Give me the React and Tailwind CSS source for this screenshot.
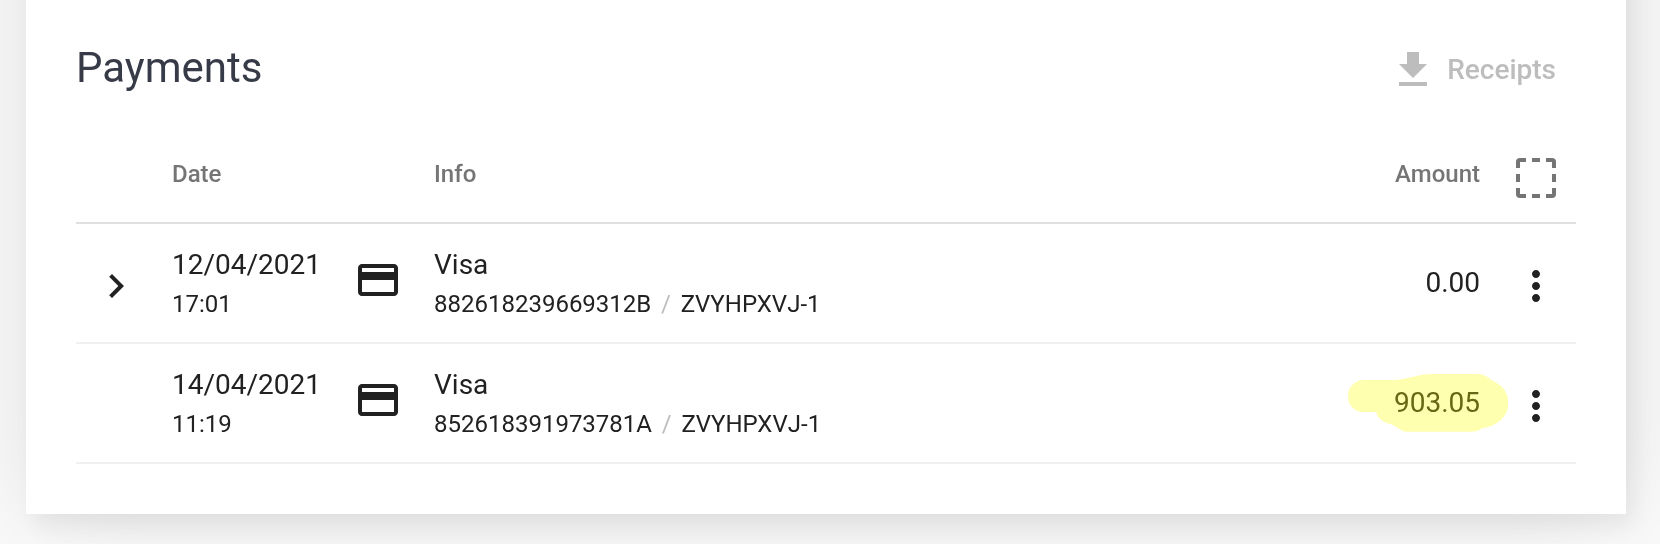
const payments = [
  {
    date: '12/04/2021',
    time: '17:01',
    method: 'Visa',
    transaction: '882618239669312B',
    reference: 'ZVYHPXVJ-1',
    amount: '0.00',
    expandable: true,
  },
  {
    date: '14/04/2021',
    time: '11:19',
    method: 'Visa',
    transaction: '852618391973781A',
    reference: 'ZVYHPXVJ-1',
    amount: '903.05',
    highlighted: true,
  },
];

const Icon = ({ d }) => (
  <svg viewBox="0 0 24 24" className="block size-12 shrink-0" fill="currentColor" aria-hidden="true">
    <path d={d} />
  </svg>
);

const icons = {
  download: 'M19 9h-4V3H9v6H5l7 7 7-7zM5 18v2h14v-2H5z',
  chevron: 'M8.59 16.59L13.17 12 8.59 7.41 10 6l6 6-6 6-1.41-1.41z',
  card: 'M20 4H4c-1.11 0-1.99.89-1.99 2L2 18c0 1.11.89 2 2 2h16c1.11 0 2-.89 2-2V6c0-1.11-.89-2-2-2zm0 14H4v-6h16v6zm0-10H4V6h16v2z',
  more: 'M12 8c1.1 0 2-.9 2-2s-.9-2-2-2-2 .9-2 2 .9 2 2 2zm0 2c-1.1 0-2 .9-2 2s.9 2 2 2 2-.9 2-2-.9-2-2-2zm0 6c-1.1 0-2 .9-2 2s.9 2 2 2 2-.9 2-2-.9-2-2-2z',
  select: 'M2 7V4a2 2 0 0 1 2-2h3v2H4v3zM10 2h4v2h-4zM17 2h3a2 2 0 0 1 2 2v3h-2V4h-3zM20 10h2v4h-2zM22 17v3a2 2 0 0 1-2 2h-3v-2h3v-3zM10 20h4v2h-4zM7 22H4a2 2 0 0 1-2-2v-3h2v3h3zM2 10h2v4H2z',
};

// Marker stroke painted over the amount
const Highlight = () => (
  <svg
    viewBox="0 0 162 60"
    className="absolute -right-[29px] -top-2.5 h-[60px] w-[162px] mix-blend-multiply"
    aria-hidden="true"
  >
    <path
      fill="#ffffb0"
      d="M17 7H46C58 7 68 2 84 1H130C137 1 141 4 145 7.500C154 11 161 19 161 27V33C161 43 149 54 136 55C132 57 130 58.700 124 58.700H60C54 58.700 49 53 44 51C37 50 31 46 29 39H17C7 39 1 32 1 23C1 14 8 7 17 7Z"
    />
  </svg>
);

const PaymentRow = ({ payment }) => (
  <div className="grid h-[120px] grid-cols-[96px_182px_80px_1fr_auto_96px] border-b-2 border-[#f0f0f0] text-[#212121]">
    <div className="pl-4 pt-[38px]">{payment.expandable && <Icon d={icons.chevron} />}</div>
    <div className="pt-[21px]">
      <p className="text-[28px] leading-10">{payment.date}</p>
      <p className="text-2xl leading-[38px]">{payment.time}</p>
    </div>
    <div className="pt-8">
      <Icon d={icons.card} />
    </div>
    <div className="pt-[21px]">
      <p className="text-[28px] leading-10">{payment.method}</p>
      <p className="text-2xl leading-[38px]">
        {payment.transaction}
        <span className="mx-[9.75px] text-[#bdbdbd]">/</span>
        {payment.reference}
      </p>
    </div>
    <div className="pt-[39px]">
      <div className="relative">
        <p className={payment.highlighted ? 'text-[28px] leading-10 text-[#68681c]' : 'text-[28px] leading-10'}>
          {payment.amount}
        </p>
        {payment.highlighted && <Highlight />}
      </div>
    </div>
    <button className="ml-8 mt-[38px] size-12" aria-label="Payment actions">
      <Icon d={icons.more} />
    </button>
  </div>
);

export default function App() {
  return (
    <div className="h-[544px] overflow-hidden bg-[#fafafa] px-[26px] font-[Roboto,sans-serif]">
      {/* the card runs on above the visible area */}
      <section className="-mt-[200px] h-[714px] w-[1600px] bg-white px-[50px] pt-[200px] shadow-[8px_12px_20px_rgba(0,0,0,0.06),0_0_100px_rgba(0,0,0,0.1)]">
        <header className="flex h-[136px] items-start justify-between pr-5 pt-[40px]">
          <h2 className="text-[42px] leading-[56px] text-[#373a47]">Payments</h2>
          <button className="mt-1.5 flex items-center gap-[10px] text-[28px] font-medium leading-[48px] text-[#bdbdbd]">
            <Icon d={icons.download} />
            Receipts
          </button>
        </header>
        <div className="grid h-[88px] grid-cols-[96px_262px_1fr_auto_96px] border-b-2 border-[#e0e0e0] text-2xl font-medium leading-[76px] text-[#757575]">
          <span />
          <span>Date</span>
          <span>Info</span>
          <span>Amount</span>
          <button className="ml-8 mt-[18px] size-12" aria-label="Select payments">
            <Icon d={icons.select} />
          </button>
        </div>
        {payments.map((payment) => (
          <PaymentRow key={payment.transaction} payment={payment} />
        ))}
      </section>
    </div>
  );
}
